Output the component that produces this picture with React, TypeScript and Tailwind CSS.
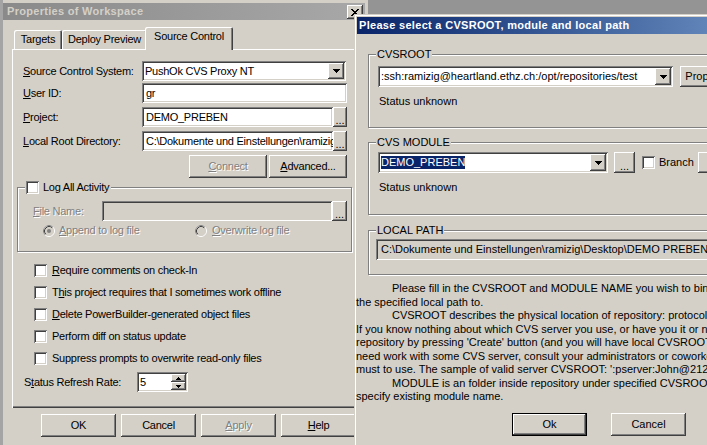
import React from "react";

const RAISED =
  "shadow-[inset_-1px_-1px_0_#404040,inset_1px_1px_0_#ffffff,inset_-2px_-2px_0_#808080,inset_2px_2px_0_#d4d0c8]";
const RAISED_DEFAULT =
  "shadow-[inset_0_0_0_1px_#000000,inset_-2px_-2px_0_#404040,inset_2px_2px_0_#ffffff,inset_-3px_-3px_0_#808080]";
const SUNKEN =
  "shadow-[inset_1px_1px_0_#808080,inset_-1px_-1px_0_#ffffff,inset_2px_2px_0_#404040,inset_-2px_-2px_0_#d4d0c8]";
const ETCHED = "border border-[#808080] shadow-[inset_1px_1px_0_#ffffff,1px_1px_0_#ffffff]";
const DISABLED = "text-[#808080] [text-shadow:1px_1px_0_#ffffff]";

function DownArrow() {
  return (
    <svg width="7" height="4" viewBox="0 0 7 4" shapeRendering="crispEdges">
      <rect x="0" y="0" width="7" height="1" fill="#000" />
      <rect x="1" y="1" width="5" height="1" fill="#000" />
      <rect x="2" y="2" width="3" height="1" fill="#000" />
      <rect x="3" y="3" width="1" height="1" fill="#000" />
    </svg>
  );
}

function SpinArrow({ up }: { up?: boolean }) {
  return (
    <svg width="5" height="3" viewBox="0 0 5 3" shapeRendering="crispEdges">
      {up ? (
        <>
          <rect x="2" y="0" width="1" height="1" fill="#000" />
          <rect x="1" y="1" width="3" height="1" fill="#000" />
          <rect x="0" y="2" width="5" height="1" fill="#000" />
        </>
      ) : (
        <>
          <rect x="0" y="0" width="5" height="1" fill="#000" />
          <rect x="1" y="1" width="3" height="1" fill="#000" />
          <rect x="2" y="2" width="1" height="1" fill="#000" />
        </>
      )}
    </svg>
  );
}

function CloseGlyph() {
  const rows = ["11000011", "01100110", "00111100", "00011000", "00111100", "01100110", "11000011"];
  return (
    <svg width="8" height="7" viewBox="0 0 8 7" shapeRendering="crispEdges">
      {rows.map((r, y) =>
        r.split("").map((c, x) => (c === "1" ? <rect key={`${x}-${y}`} x={x} y={y} width="1" height="1" fill="#000" /> : null))
      )}
    </svg>
  );
}

function Button({
  className = "",
  children,
  disabled,
  isDefault,
}: {
  className?: string;
  children?: React.ReactNode;
  disabled?: boolean;
  isDefault?: boolean;
}) {
  return (
    <div
      className={`flex shrink-0 items-center justify-center whitespace-nowrap bg-[#d4d0c8] ${isDefault ? RAISED_DEFAULT : RAISED} ${
        disabled ? DISABLED : ""
      } ${className}`}
    >
      {children}
    </div>
  );
}

function Browse({ className = "" }: { className?: string }) {
  return (
    <div className={`flex shrink-0 items-end justify-center bg-[#d4d0c8] pb-[3px] leading-[8px] ${RAISED} ${className}`}>
      <span className="tracking-[0px]">...</span>
    </div>
  );
}

function Combo({ className = "", children }: { className?: string; children?: React.ReactNode }) {
  return (
    <div className={`flex shrink-0 items-stretch bg-white ${SUNKEN} ${className}`}>
      <div className="flex min-w-0 flex-1 items-center overflow-hidden whitespace-nowrap pl-[3px]">{children}</div>
      <div className={`my-[2px] mr-[2px] flex w-[16px] items-center justify-center bg-[#d4d0c8] ${RAISED}`}>
        <DownArrow />
      </div>
    </div>
  );
}

function Field({
  className = "",
  children,
  gray,
}: {
  className?: string;
  children?: React.ReactNode;
  gray?: boolean;
}) {
  return (
    <div
      className={`flex shrink-0 items-center overflow-hidden whitespace-nowrap pl-[4px] ${gray ? "bg-[#d4d0c8]" : "bg-white"} ${SUNKEN} ${className}`}
    >
      {children}
    </div>
  );
}

function Check({ className = "" }: { className?: string }) {
  return <div className={`h-[13px] w-[13px] shrink-0 bg-white ${SUNKEN} ${className}`} />;
}

function Radio({ checked, className = "" }: { checked?: boolean; className?: string }) {
  return (
    <svg width="12" height="12" viewBox="0 0 12 12" className={`shrink-0 ${className}`}>
      <circle cx="6" cy="6" r="4" fill="#d4d0c8" />
      <circle cx="6" cy="6" r="5.5" fill="none" stroke="#ffffff" />
      <path d="M2.11 9.89 A5.5 5.5 0 0 1 9.89 2.11" fill="none" stroke="#808080" />
      <circle cx="6" cy="6" r="4.5" fill="none" stroke="#d4d0c8" />
      <path d="M2.82 9.18 A4.5 4.5 0 0 1 9.18 2.82" fill="none" stroke="#404040" />
      {checked && <circle cx="6" cy="6" r="2" fill="#808080" />}
    </svg>
  );
}

function U({ children }: { children: React.ReactNode }) {
  return <span className="underline underline-offset-[1px]">{children}</span>;
}

function Tab({ className = "", children }: { className?: string; children: React.ReactNode }) {
  return (
    <div
      className={`flex shrink-0 items-center justify-center rounded-t-[2px] bg-[#d4d0c8] shadow-[inset_1px_1px_0_#ffffff,inset_-1px_0_0_#404040,inset_-2px_0_0_#808080] ${className}`}
    >
      {children}
    </div>
  );
}

const OPTIONS: React.ReactNode[] = [
  <>
    <U>R</U>equire comments on check-In
  </>,
  <>
    T<U>h</U>is project requires that I sometimes work offline
  </>,
  <>
    <U>D</U>elete PowerBuilder-generated object files
  </>,
  <>Perform diff on status update</>,
  <>Suppress prompts to overwrite read-only files</>,
];

function WorkspaceProperties() {
  return (
    <div className="absolute left-0 top-0 h-[470px] w-[368px] bg-[#d4d0c8] tracking-[-0.25px] shadow-[inset_3px_0_0_#a4a4a4]">
      {/* caption */}
      <div className="relative mx-[3px] mt-[3px] flex h-[17px] items-center bg-linear-to-r from-[#8a8a8a] to-[#a8a8a8] pl-[4px]">
        <span className="font-bold tracking-[0.3px] text-[#d4d0c8]">Properties of Workspace</span>
        <div className={`absolute right-[2px] top-[2px] flex h-[14px] w-[16px] items-center justify-center bg-[#d4d0c8] ${RAISED}`}>
          <CloseGlyph />
        </div>
      </div>

      {/* tabs */}
      <div className="flex h-[29px] items-end pl-[14px]">
        <Tab className="h-[19px] w-[48px]">Targets</Tab>
        <Tab className="h-[19px] w-[85px]">Deploy Preview</Tab>
        <div className="relative z-10 -mb-[1px] -ml-[2px] flex h-[23px] w-[88px] justify-center rounded-t-[2px] bg-[#d4d0c8] pt-[3px] shadow-[inset_1px_1px_0_#ffffff,inset_-1px_0_0_#404040,inset_-2px_0_0_#808080]">
          Source Control
        </div>
      </div>

      {/* tab page */}
      <div className="ml-[12px] flex h-[359px] w-[350px] flex-col shadow-[inset_1px_1px_0_#ffffff,inset_-1px_-1px_0_#404040,inset_-2px_-2px_0_#808080]">
        <div className="mt-[12px] flex h-[20px] items-center">
          <div className="ml-[11px] w-[119px]">
            <U>S</U>ource Control System:
          </div>
          <Combo className="h-[20px] w-[204px]">PushOk CVS Proxy NT</Combo>
        </div>
        <div className="mt-[2px] flex h-[20px] items-center">
          <div className="ml-[11px] w-[119px]">
            <U>U</U>ser ID:
          </div>
          <Field className="h-[20px] w-[205px]">gr</Field>
        </div>
        <div className="mt-[4px] flex h-[20px] items-center">
          <div className="ml-[11px] w-[119px]">
            <U>P</U>roject:
          </div>
          <Field className="h-[20px] w-[191px]">DEMO_PREBEN</Field>
          <Browse className="h-[20px] w-[14px]" />
        </div>
        <div className="mt-[4px] flex h-[20px] items-center">
          <div className="ml-[11px] w-[119px]">
            <U>L</U>ocal Root Directory:
          </div>
          <Field className="h-[20px] w-[191px]">C:\Dokumente und Einstellungen\ramizig\Desktop</Field>
          <Browse className="h-[20px] w-[14px]" />
        </div>
        <div className="mt-[4px] flex h-[23px]">
          <Button className="ml-[177px] w-[78px]" disabled>
            <U>C</U>onnect
          </Button>
          <Button className="ml-[2px] w-[78px]">
            <U>A</U>dvanced...
          </Button>
        </div>

        {/* logging group */}
        <div className={`relative ml-[5px] mt-[9px] h-[65px] w-[335px] ${ETCHED}`}>
          <div className="absolute -top-[8px] left-[7px] flex h-[15px] items-center bg-[#d4d0c8] pl-[1px] pr-[2px]">
            <Check />
            <span className="ml-[4px]">Log All Activity</span>
          </div>
          <div className="mt-[13px] flex h-[20px] items-center">
            <span className={`ml-[15px] w-[69px] ${DISABLED}`}>
              <U>F</U>ile Name:
            </span>
            <Field gray className="h-[20px] w-[230px]" />
            <Browse className="h-[20px] w-[15px]" />
          </div>
          <div className="mt-[3px] flex h-[13px] items-center">
            <div className="ml-[25px] flex w-[152px] items-center">
              <Radio checked />
              <span className={`ml-[4px] ${DISABLED}`}>
                <U>A</U>ppend to log file
              </span>
            </div>
            <Radio />
            <span className={`ml-[5px] ${DISABLED}`}>
              <U>O</U>verwrite log file
            </span>
          </div>
        </div>

        <div className="mt-[7px] flex flex-col">
          {OPTIONS.map((label, i) => (
            <div key={i} className="flex h-[22px] items-center">
              <Check className="ml-[22px]" />
              <span className="ml-[5px] whitespace-nowrap">{label}</span>
            </div>
          ))}
        </div>

        <div className="mt-[3px] flex h-[20px] items-center">
          <div className="ml-[12px] w-[113px]">
            S<U>t</U>atus Refresh Rate:
          </div>
          <div className={`flex h-[20px] w-[51px] bg-white ${SUNKEN}`}>
            <span className="flex flex-1 items-center pl-[3px]">5</span>
            <div className="mr-[2px] mt-[2px] flex w-[15px] flex-col">
              <div className={`flex h-[8px] items-center justify-center bg-[#d4d0c8] ${RAISED}`}>
                <SpinArrow up />
              </div>
              <div className={`flex h-[8px] items-center justify-center bg-[#d4d0c8] ${RAISED}`}>
                <SpinArrow />
              </div>
            </div>
          </div>
        </div>
      </div>

      {/* dialog buttons */}
      <div className="ml-[41px] mt-[6px] flex h-[23px] gap-[5px]">
        <Button className="w-[75px]">OK</Button>
        <Button className="w-[75px]">Cancel</Button>
        <Button className="w-[75px]" disabled>
          <U>A</U>pply
        </Button>
        <Button className="w-[75px]">
          <U>H</U>elp
        </Button>
      </div>
    </div>
  );
}

const HELP_LINES: { indent?: boolean; text: string }[] = [
  { indent: true, text: "Please fill in the CVSROOT and MODULE NAME you wish to bind" },
  { text: "the specified local path to." },
  { indent: true, text: "CVSROOT describes the physical location of repository: protocol, server and path." },
  { text: "If you know nothing about which CVS server you use, or have you it or not, you can create local" },
  { text: "repository by pressing 'Create' button (and you will have local CVSROOT). If you" },
  { text: "need work with some CVS server, consult your administrators or coworkers about CVSROOT you" },
  { text: "must to use. The sample of valid server CVSROOT: ':pserver:John@212.1.1.1:/cvs'." },
  { indent: true, text: "MODULE is an folder inside repository under specified CVSROOT. You must" },
  { text: "specify existing module name." },
];

function SelectCvsRoot() {
  return (
    <div className="absolute left-[354px] top-[14px] h-[440px] w-[600px] overflow-hidden bg-[#d4d0c8] shadow-[inset_1px_1px_0_#d4d0c8,inset_2px_2px_0_#ffffff]">
      <div className="mx-[3px] mt-[3px] flex h-[17px] items-center bg-linear-to-r from-[#0a246a] to-[#a6caf0] pl-[2px]">
        <span className="font-bold tracking-[0.3px] text-white">Please select a CVSROOT, module and local path</span>
      </div>

      {/* CVSROOT */}
      <div className={`relative ml-[14px] mt-[20px] h-[74px] w-[400px] ${ETCHED}`}>
        <span className="absolute -top-[7px] left-[7px] bg-[#d4d0c8] px-[1px]">CVSROOT</span>
        <div className="mt-[11px] flex items-center">
          <Combo className="ml-[9px] h-[21px] w-[295px]">:ssh:ramizig@heartland.ethz.ch:/opt/repositories/test</Combo>
          <Button className="ml-[7px] h-[21px] w-[70px]">Properties...</Button>
        </div>
        <div className="ml-[10px] mt-[8px]">Status unknown</div>
      </div>

      {/* CVS MODULE */}
      <div className={`relative ml-[14px] mt-[14px] h-[73px] w-[400px] ${ETCHED}`}>
        <span className="absolute -top-[7px] left-[7px] bg-[#d4d0c8] px-[1px]">CVS MODULE</span>
        <div className="mt-[9px] flex items-center">
          <Combo className="ml-[9px] h-[21px] w-[230px]">
            <span className="bg-[#0a246a] text-white">DEMO_PREBEN</span>
          </Combo>
          <Button className="ml-[6px] h-[21px] w-[21px] items-end pb-[3px] leading-[8px]">...</Button>
          <Check className="ml-[7px]" />
          <span className="ml-[4px]">Branch</span>
          <Button className="ml-[4px] h-[21px] w-[75px]">Create</Button>
        </div>
        <div className="ml-[10px] mt-[8px]">Status unknown</div>
      </div>

      {/* LOCAL PATH */}
      <div className={`relative ml-[14px] mt-[15px] h-[45px] w-[400px] ${ETCHED}`}>
        <span className="absolute -top-[7px] left-[7px] bg-[#d4d0c8] px-[1px]">LOCAL PATH</span>
        <Field gray className="ml-[7px] mt-[8px] h-[21px] w-[360px] pl-[5px]">
          C:\Dokumente und Einstellungen\ramizig\Desktop\DEMO PREBEN
        </Field>
      </div>

      {/* explanation */}
      <div className="ml-[2px] mt-[7px] leading-[13.5px]">
        {HELP_LINES.map((l, i) => (
          <div key={i} className={`whitespace-nowrap ${l.indent ? "pl-[36px]" : ""}`}>
            {l.text}
          </div>
        ))}
      </div>

      <div className="mt-[9px] flex h-[23px]">
        <Button isDefault className="ml-[158px] w-[75px]">
          Ok
        </Button>
        <Button className="ml-[24px] w-[75px]">Cancel</Button>
      </div>
    </div>
  );
}

export default function App() {
  return (
    <div className="relative h-[445px] w-[707px] overflow-hidden bg-[#949494] font-['Liberation_Sans',Arial,sans-serif] text-[11px] leading-[13px] text-black">
      <WorkspaceProperties />
      <SelectCvsRoot />
    </div>
  );
}
